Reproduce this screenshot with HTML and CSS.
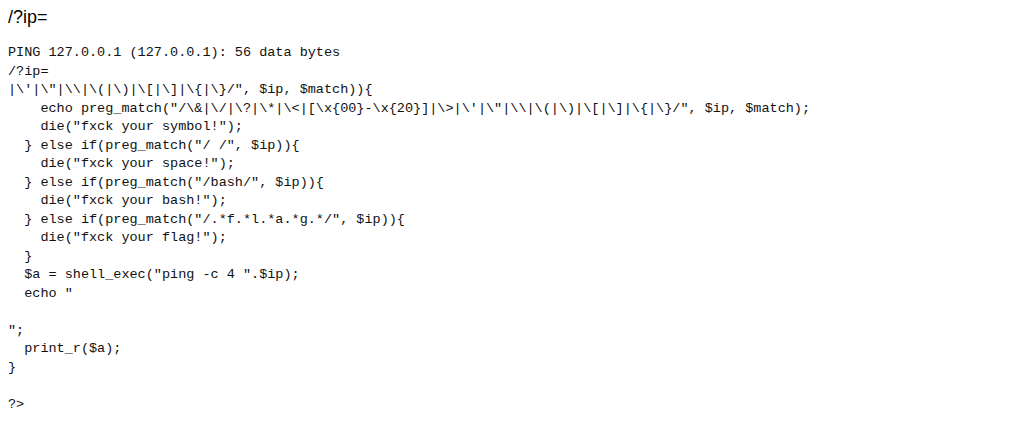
FILE: index.html
```html
<!DOCTYPE html>
<html>
<head>
<meta charset="utf-8">
<link rel="stylesheet" href="styles.css">
</head>
<body>
<div class="query">/?ip=</div>
<pre class="output">PING 127.0.0.1 (127.0.0.1): 56 data bytes
/?ip=
|\'|\"|\\|\(|\)|\[|\]|\{|\}/", $ip, $match)){
    echo preg_match("/\&amp;|\/|\?|\*|\&lt;|[\x{00}-\x{20}]|\&gt;|\'|\"|\\|\(|\)|\[|\]|\{|\}/", $ip, $match);
    die("fxck your symbol!");
  } else if(preg_match("/ /", $ip)){
    die("fxck your space!");
  } else if(preg_match("/bash/", $ip)){
    die("fxck your bash!");
  } else if(preg_match("/.*f.*l.*a.*g.*/", $ip)){
    die("fxck your flag!");
  }
  $a = shell_exec("ping -c 4 ".$ip);
  echo "

";
  print_r($a);
}

?></pre>
</body>
</html>
```
FILE: styles.css
```css
html, body {
  background: #ffffff;
}
body {
  margin: 8px;
  color: #000000;
}
.query {
  font-family: "Liberation Sans", Arial, sans-serif;
  font-size: 18px;
  line-height: 18px;
}
.output {
  margin: 18px 0 0 0;
  font-family: "Liberation Mono", "Noto Sans CJK SC", monospace;
  font-size: 13.5px;
  line-height: 18.5px;
  color: #111111;
}
```
